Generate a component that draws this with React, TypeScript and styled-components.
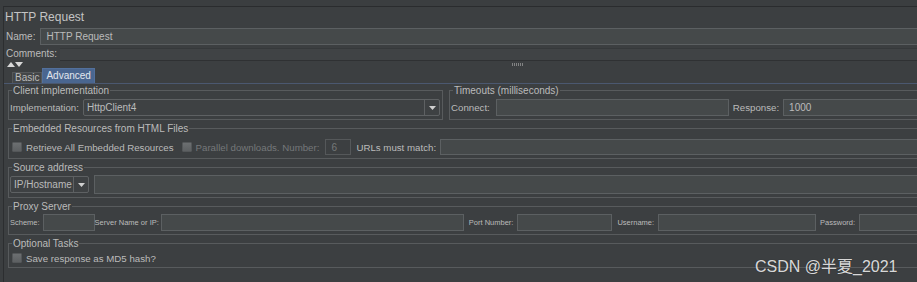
import React from 'react'
import styled, { createGlobalStyle } from 'styled-components'

const GlobalStyle = createGlobalStyle`
  html, body {
    margin: 0;
    padding: 0;
    background: #3b3e40;
    overflow: hidden;
  }
  body {
    font-family: "Liberation Sans", Arial, sans-serif;
    font-size: 10px;
    color: #bbbbbb;
  }
`

const Page = styled.div`
  width: 940px;
  height: 282px;
  padding-top: 6px;
  box-sizing: border-box;
  background: #3b3e40;
`

const Panel = styled.div`
  position: relative;
  height: 100%;
  margin-left: 3px;
  border-top: 1px solid #2a2c2e;
  border-left: 1px solid #2c2e30;
  background: #3c3f41;
  box-sizing: border-box;
`

const Title = styled.div`
  height: 20px;
  line-height: 20px;
  padding-left: 1px;
  font-size: 12px;
  color: #c4c4c4;
`

const FormRow = styled.div<{ $h: number }>`
  display: flex;
  align-items: center;
  height: ${(p) => p.$h}px;
  padding-left: 2px;
`

const RowLabel = styled.span<{ $gap: number }>`
  margin-right: ${(p) => p.$gap}px;
  white-space: nowrap;
`

const Field = styled.input<{ $w?: number; $h?: number; $off?: boolean }>`
  box-sizing: border-box;
  ${(p) => (p.$w ? `width: ${p.$w}px; flex: none;` : 'flex: 1; min-width: 0;')}
  height: ${(p) => p.$h ?? 17}px;
  margin: 0;
  padding: 0 5px;
  background: ${(p) => (p.$off ? '#3c3f41' : '#45494a')};
  border: 1px solid ${(p) => (p.$off ? '#55585a' : '#5c6062')};
  color: ${(p) => (p.$off ? '#75787a' : '#bbbbbb')};
  font: 10px "Liberation Sans", Arial, sans-serif;
  outline: none;
`

const CommentsArea = styled.div`
  flex: 1;
  align-self: flex-end;
  height: 13px;
  background: #404345;
  border-top: 1px solid #36393b;
  border-bottom: 1px solid #2f3133;
  box-sizing: border-box;
`

const Splitter = styled.div`
  position: relative;
  display: flex;
  align-items: center;
  height: 7px;
  padding-left: 3px;
`

const Grip = styled.div`
  position: absolute;
  left: 508px;
  top: 2px;
  width: 11px;
  height: 3px;
  background: repeating-linear-gradient(90deg, #a0a0a0 0 1px, transparent 1px 2px);
  opacity: 0.7;
`

const TabBar = styled.div`
  display: flex;
  align-items: flex-end;
  height: 15px;
  padding-left: 8px;
  border-bottom: 1px solid #4b5870;
`

const Tab = styled.div<{ $active?: boolean }>`
  height: ${(p) => (p.$active ? 15 : 11)}px;
  line-height: ${(p) => (p.$active ? 13 : 10)}px;
  padding: 0 ${(p) => (p.$active ? 3 : 2)}px;
  box-sizing: border-box;
  background: ${(p) => (p.$active ? '#4a6690' : '#434648')};
  border: 1px solid ${(p) => (p.$active ? '#52709c' : '#55585a')};
  border-bottom: none;
  color: ${(p) => (p.$active ? '#e2e6ee' : '#bbbbbb')};
  font-size: 10px;
`

const Content = styled.div`
  display: flex;
  flex-direction: column;
  gap: 3px;
  padding: 1px 0 0 4px;
`

const GroupRow = styled.div`
  display: flex;
  gap: 6px;
`

const Group = styled.fieldset<{ $w?: number }>`
  margin: 0;
  min-width: 0;
  padding: 1px 2px 3px 1px;
  border: 1px solid #585b5d;
  box-sizing: border-box;
  ${(p) => (p.$w ? `width: ${p.$w}px; flex: none;` : 'flex: 1;')}
`

const Legend = styled.legend`
  margin-left: 2px;
  padding: 0 1px;
  font-size: 10px;
  line-height: 11px;
  color: #bbbbbb;
`

const Line = styled.div<{ $h?: number; $top?: number }>`
  display: flex;
  align-items: center;
  height: ${(p) => p.$h ?? 17}px;
  margin-top: ${(p) => p.$top ?? 2}px;
  white-space: nowrap;
`

const Label = styled.span<{ $gap?: number; $lead?: number; $off?: boolean; $small?: boolean }>`
  margin: 0 ${(p) => p.$gap ?? 4}px 0 ${(p) => p.$lead ?? 0}px;
  color: ${(p) => (p.$off ? '#75787a' : '#bbbbbb')};
  font-size: ${(p) => (p.$small ? 7.5 : 9.7)}px;
`

const Check = styled.span`
  display: inline-block;
  width: 8px;
  height: 8px;
  margin: 0 4px 0 2px;
  border-radius: 1px;
  background: linear-gradient(#6c6f71, #5d6062);
  border: 1px solid #545759;
`

const Combo = styled.div<{ $w?: number }>`
  display: flex;
  box-sizing: border-box;
  ${(p) => (p.$w ? `width: ${p.$w}px; flex: none;` : 'flex: 1; min-width: 0;')}
  height: 17px;
  background: #3e4143;
  border: 1px solid #5e6163;
  border-radius: 2px;
`

const ComboText = styled.span`
  flex: 1;
  padding-left: 3px;
  line-height: 15px;
  font-size: 10px;
  overflow: hidden;
`

const ComboButton = styled.span`
  display: flex;
  align-items: center;
  justify-content: center;
  width: 14px;
  border-left: 1px solid #5e6163;
`

const Watermark = styled.div`
  position: absolute;
  left: 751px;
  top: 246px;
  font: 16px "Liberation Sans", "Noto Sans CJK SC", sans-serif;
  color: rgba(240, 240, 240, 0.9);
  text-shadow: 0 0 1px rgba(0, 0, 0, 0.4);
  white-space: nowrap;
`

const Arrow = ({ up }: { up?: boolean }) => (
  <svg width="8" height="5" viewBox="0 0 8 5">
    <path d={up ? 'M0 5 L4 0 L8 5 Z' : 'M0 0 L8 0 L4 5 Z'} fill="#d8d8d8" />
  </svg>
)

const Caret = () => (
  <svg width="7" height="4" viewBox="0 0 7 4">
    <path d="M0 0 L7 0 L3.5 4 Z" fill="#d0d0d0" />
  </svg>
)

export default function App() {
  return (
    <Page>
      <GlobalStyle />
      <Panel>
        <Title>HTTP Request</Title>
        <FormRow $h={19}>
          <RowLabel $gap={5}>Name:</RowLabel>
          <Field readOnly value="HTTP Request" />
        </FormRow>
        <FormRow $h={15}>
          <RowLabel $gap={3}>Comments:</RowLabel>
          <CommentsArea />
        </FormRow>
        <Splitter>
          <Arrow up />
          <Arrow />
          <Grip />
        </Splitter>
        <TabBar>
          <Tab>Basic</Tab>
          <Tab $active>Advanced</Tab>
        </TabBar>
        <Content>
          <GroupRow>
            <Group $w={435}>
              <Legend>Client implementation</Legend>
              <Line>
                <Label>Implementation:</Label>
                <Combo>
                  <ComboText>HttpClient4</ComboText>
                  <ComboButton>
                    <Caret />
                  </ComboButton>
                </Combo>
              </Line>
            </Group>
            <Group>
              <Legend>Timeouts (milliseconds)</Legend>
              <Line>
                <Label $gap={6}>Connect:</Label>
                <Field readOnly value="" $w={233} />
                <Label $lead={4}>Response:</Label>
                <Field readOnly value="1000" />
              </Line>
            </Group>
          </GroupRow>
          <Group>
            <Legend>Embedded Resources from HTML Files</Legend>
            <Line $h={16} $top={4}>
              <Check />
              <Label $gap={6}>Retrieve All Embedded Resources</Label>
              <Check />
              <Label $off $gap={6}>Parallel downloads. Number:</Label>
              <Field readOnly value="6" $w={26} $h={16} $off />
              <Label $lead={5}>URLs must match:</Label>
              <Field readOnly value="" $h={16} />
            </Line>
          </Group>
          <Group>
            <Legend>Source address</Legend>
            <Line $h={19} $top={1}>
              <Combo $w={79}>
                <ComboText>IP/Hostname</ComboText>
                <ComboButton>
                  <Caret />
                </ComboButton>
              </Combo>
              <Field readOnly value="" $h={19} style={{ marginLeft: 5 }} />
            </Line>
          </Group>
          <Group>
            <Legend>Proxy Server</Legend>
            <Line $h={17} $top={1}>
              <Label $small $gap={3}>Scheme:</Label>
              <Field readOnly value="" $w={52} />
              <Label $small $gap={2}>Server Name or IP:</Label>
              <Field readOnly value="" $w={303} />
              <Label $small $gap={4} $lead={5}>Port Number:</Label>
              <Field readOnly value="" $w={95} />
              <Label $small $gap={4} $lead={5}>Username:</Label>
              <Field readOnly value="" $w={158} />
              <Label $small $gap={4} $lead={4}>Password:</Label>
              <Field readOnly value="" />
            </Line>
          </Group>
          <Group>
            <Legend>Optional Tasks</Legend>
            <Line $h={12} $top={2}>
              <Check />
              <Label>Save response as MD5 hash?</Label>
            </Line>
          </Group>
        </Content>
        <Watermark>CSDN @半夏_2021</Watermark>
      </Panel>
    </Page>
  )
}
